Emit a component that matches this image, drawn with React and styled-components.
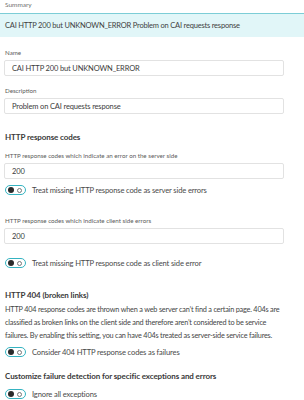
import styled, { createGlobalStyle } from 'styled-components';

const GlobalStyle = createGlobalStyle`
    body {
        margin: 0;
        background: #ffffff;
        font-family: Lato, "Open Sans", sans-serif;
        color: #454646;
    }
`;

const Page = styled('div')`
    width: 304px;
    height: 400px;
    overflow: hidden;
`;

const SummaryLabel = styled('div')`
    font-size: 6.5px;
    color: #6f6f6f;
    padding: 1px 5px 0;
    height: 12px;
`;

const Banner = styled('div')`
    background: #e1f6f8;
    border-top: 1px solid #7ccdd6;
    height: 23px;
    display: flex;
    align-items: center;
    padding: 0 5px;
    font-size: 7.5px;
    letter-spacing: -0.2px;
    color: #3f3f3f;
`;

const Content = styled('div')`
    padding: 12px 20px 0 4px;
`;

const Field = styled('div')`
    margin-bottom: ${(p) => p.$gap || 0}px;
`;

const Label = styled('div')`
    font-size: 6.2px;
    color: #5a5a5a;
    margin-bottom: 4px;
    padding-left: 1px;
`;

const Input = styled('div')`
    height: 16px;
    box-sizing: border-box;
    border: 1px solid #e2e2e2;
    border-radius: 2px;
    display: flex;
    align-items: center;
    padding: 0 7px;
    font-size: 7.5px;
    letter-spacing: -0.15px;
    color: #3c3c3c;
`;

const Heading = styled('div')`
    font-size: 8px;
    font-weight: 700;
    letter-spacing: -0.1px;
    color: #3a3a3a;
    margin: 0 0 ${(p) => p.$bottom || 8}px 1px;
`;

const ToggleRow = styled('div')`
    display: flex;
    align-items: center;
    gap: 6px;
    font-size: 7.6px;
    letter-spacing: -0.15px;
    color: #4a4a4a;
    margin: ${(p) => p.$top || 0}px 0 ${(p) => p.$bottom || 0}px 1px;
`;

const Switch = styled('div')`
    width: 21px;
    height: 10px;
    box-sizing: border-box;
    border: 1.5px solid #35b3c1;
    border-radius: 6px;
    display: flex;
    align-items: center;
    justify-content: space-between;
    padding: 0 2px;
    flex-shrink: 0;
`;

const Knob = styled('span')`
    width: 6px;
    height: 6px;
    border-radius: 50%;
    background: #2b2b2b;
`;

const Off = styled('span')`
    width: 3px;
    height: 3px;
    border-radius: 50%;
    border: 0.8px solid #777;
    margin-right: 1px;
`;

const Paragraph = styled('p')`
    margin: 0 -16px 5px 1px;
    font-size: 7.3px;
    letter-spacing: -0.2px;
    line-height: 13px;
    color: #454646;
    white-space: nowrap;
`;

function Toggle({ children, top, bottom }) {
    return (
        <ToggleRow $top={top} $bottom={bottom}>
            <Switch>
                <Knob />
                <Off />
            </Switch>
            <span>{children}</span>
        </ToggleRow>
    );
}

export default function App() {
    return (
        <Page>
            <GlobalStyle />
            <SummaryLabel>Summary</SummaryLabel>
            <Banner>CAI HTTP 200 but UNKNOWN_ERROR Problem on CAI requests response</Banner>
            <Content>
                <Field $gap={11}>
                    <Label>Name</Label>
                    <Input>CAI HTTP 200 but UNKNOWN_ERROR</Input>
                </Field>
                <Field $gap={18}>
                    <Label>Description</Label>
                    <Input>Problem on CAI requests response</Input>
                </Field>
                <Heading $bottom={10}>HTTP response codes</Heading>
                <Field>
                    <Label>HTTP response codes which indicate an error on the server side</Label>
                    <Input>200</Input>
                </Field>
                <Toggle top={6} bottom={22}>Treat missing HTTP response code as server side errors</Toggle>
                <Field>
                    <Label>HTTP response codes which indicate client side errors</Label>
                    <Input>200</Input>
                </Field>
                <Toggle top={14} bottom={22}>Treat missing HTTP response code as client side error</Toggle>
                <Heading $bottom={3}>HTTP 404 (broken links)</Heading>
                <Paragraph>
                    HTTP 404 response codes are thrown when a web server can’t find a certain page. 404s are
                    <br />
                    classified as broken links on the client side and therefore aren’t considered to be service
                    <br />
                    failures. By enabling this setting, you can have 404s treated as server-side service failures.
                </Paragraph>
                <Toggle bottom={14}>Consider 404 HTTP response codes as failures</Toggle>
                <Heading $bottom={8}>Customize failure detection for specific exceptions and errors</Heading>
                <Toggle>Ignore all exceptions</Toggle>
            </Content>
        </Page>
    );
}
